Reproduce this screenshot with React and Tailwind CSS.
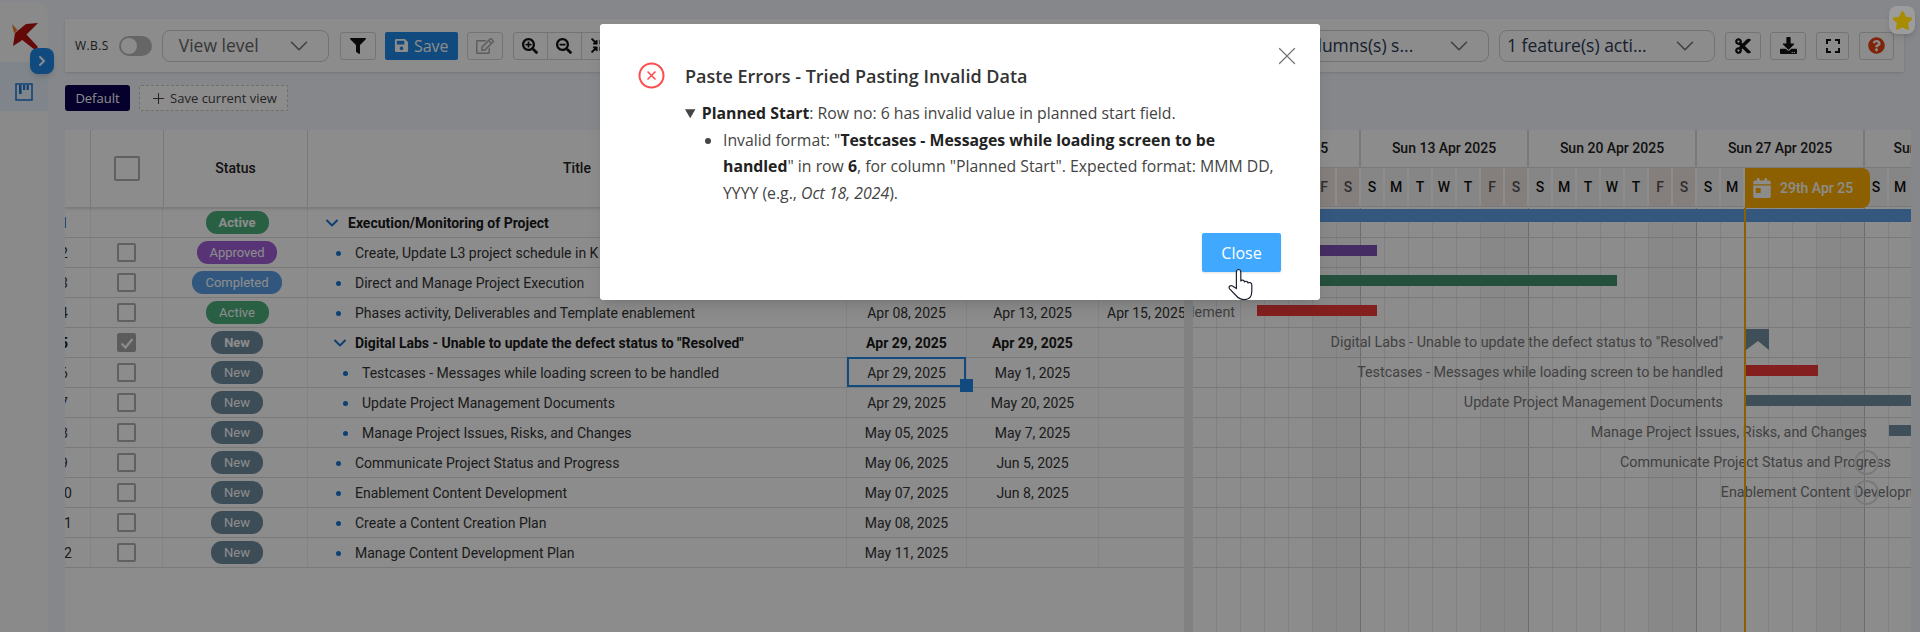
import { ChevronDown, ChevronRight, Plus, X } from 'lucide-react';
import {
  FaCalendarDay,
  FaCompressArrowsAlt,
  FaCut,
  FaDownload,
  FaFilter,
  FaQuestionCircle,
  FaRegEdit,
  FaSave,
  FaSearchMinus,
  FaSearchPlus,
  FaStar,
} from 'react-icons/fa';
import { MdFullscreen } from 'react-icons/md';

const PILLS = {
  Active: 'bg-[#4caf7d] w-[63px]',
  Approved: 'bg-[#a05fd8] w-[80px]',
  Completed: 'bg-[#5a9fe8] w-[90px]',
  New: 'bg-[#6f8d9e] w-[52px]',
};

const ROWS = [
  { id: 1, status: 'Active', title: 'Execution/Monitoring of Project', group: true, noCheck: true, indent: 0 },
  { id: 2, status: 'Approved', title: 'Create, Update L3 project schedule in K', indent: 1 },
  { id: 3, status: 'Completed', title: 'Direct and Manage Project Execution', indent: 1 },
  { id: 4, status: 'Active', title: 'Phases activity, Deliverables and Template enablement', indent: 1, start: 'Apr 08, 2025', end: 'Apr 13, 2025', extra: 'Apr 15, 2025' },
  { id: 5, status: 'New', title: 'Digital Labs - Unable to update the defect status to "Resolved"', group: true, checked: true, indent: 1, start: 'Apr 29, 2025', end: 'Apr 29, 2025' },
  { id: 6, status: 'New', title: 'Testcases - Messages while loading screen to be handled', indent: 2, start: 'Apr 29, 2025', end: 'May 1, 2025', selected: true },
  { id: 7, status: 'New', title: 'Update Project Management Documents', indent: 2, start: 'Apr 29, 2025', end: 'May 20, 2025' },
  { id: 8, status: 'New', title: 'Manage Project Issues, Risks, and Changes', indent: 2, start: 'May 05, 2025', end: 'May 7, 2025' },
  { id: 9, status: 'New', title: 'Communicate Project Status and Progress', indent: 1, start: 'May 06, 2025', end: 'Jun 5, 2025' },
  { id: 10, status: 'New', title: 'Enablement Content Development', indent: 1, start: 'May 07, 2025', end: 'Jun 8, 2025' },
  { id: 11, status: 'New', title: 'Create a Content Creation Plan', indent: 1, start: 'May 08, 2025' },
  { id: 12, status: 'New', title: 'Manage Content Development Plan', indent: 1, start: 'May 11, 2025' },
];

const INDENTS = ['pl-[16px]', 'pl-[24px]', 'pl-[31px]'];

const WEEKS = ['Sun 06 Apr 2025', 'Sun 13 Apr 2025', 'Sun 20 Apr 2025', 'Sun 27 Apr 2025', 'Sun 04 May 2025'];
const DAYS = ['S', 'M', 'T', 'W', 'T', 'F', 'S'];

// one entry per gantt row, x values measured from the left edge of the chart
const GANTT = [
  { bar: [-200, 920], color: 'bg-[#5f9fe6]', tall: true },
  { bar: [-60, 244], color: 'bg-[#7f50b5]' },
  { bar: [-60, 484], color: 'bg-[#449070]' },
  { bar: [64, 120], color: 'bg-[#f03a3a]', label: 'Phases activity, Deliverables and Template enablement', labelEnd: 42 },
  { milestone: true, label: 'Digital Labs - Unable to update the defect status to "Resolved"', labelEnd: 530 },
  { bar: [552.5, 72], color: 'bg-[#f03a3a]', label: 'Testcases - Messages while loading screen to be handled', labelEnd: 530 },
  { bar: [552.5, 170], color: 'bg-[#7291a4]', label: 'Update Project Management Documents', labelEnd: 530 },
  { bar: [696, 30], color: 'bg-[#7291a4]', label: 'Manage Project Issues, Risks, and Changes', labelEnd: 674 },
  { ring: true, label: 'Communicate Project Status and Progress', labelEnd: 698 },
  { ring: true, label: 'Enablement Content Development', labelEnd: 745 },
  {},
  {},
];

function ToolButton({ className = '', children }) {
  return (
    <div className={`h-[28px] flex items-center justify-center border border-[#d4d4d4] rounded-[3px] shrink-0 ${className}`}>
      {children}
    </div>
  );
}

function Select({ className = '', label }) {
  return (
    <div className={`h-[32px] flex items-center justify-between border border-[#d0d0d0] rounded-[8px] pr-[14px] shrink-0 text-[17.5px] font-['Open_Sans',sans-serif] overflow-hidden ${className}`}>
      <span className="whitespace-nowrap">{label}</span>
      <ChevronDown className="w-[30px] h-[30px] text-[#777] shrink-0" strokeWidth={1.3} />
    </div>
  );
}

function Logo() {
  return (
    <svg viewBox="0 0 26 27" className="w-[26px] h-[27px]">
      <polygon points="0,1 5.5,7 2,10" fill="#f07a28" />
      <polygon points="26,0 14,1 3,10 1,23 9,18 15,11" fill="#b5120e" />
      <polygon points="9,16 14,11 26,24 23,27" fill="#b5120e" />
    </svg>
  );
}

function Sidebar() {
  return (
    <div className="w-[48px] shrink-0 mt-[2px] bg-[#fbfcfe] rounded-tr-[14px] flex flex-col relative">
      <div className="h-[60px] pt-[21px] pl-[12px]">
        <Logo />
      </div>
      <div className="h-[49px] bg-[#e8f2fb] flex items-center justify-center pt-[10px]">
        <svg viewBox="0 0 18 18" className="w-[18px] h-[18px] text-[#1976d2]" fill="none" stroke="currentColor">
          <rect x="1" y="1" width="16" height="16" strokeWidth="1.5" />
          <rect x="4" y="2" width="2.6" height="9" fill="currentColor" stroke="none" />
          <rect x="8" y="2" width="2.2" height="5" fill="currentColor" stroke="none" />
          <rect x="11.6" y="2" width="2.2" height="5" fill="currentColor" stroke="none" />
        </svg>
      </div>
      <div className="absolute left-[30px] top-[46px] w-[24px] h-[26px] rounded-[8px] bg-[#1e88e5] flex items-center justify-center shadow-md">
        <ChevronRight className="w-[16px] h-[16px] text-white" strokeWidth={3} />
      </div>
    </div>
  );
}

function Toolbar() {
  return (
    <div className="h-[53px] w-[1839px] mt-[19px] bg-white shadow-sm flex items-center pl-[10px] shrink-0">
      <span className="text-[12px] tracking-[0.4px] text-[#333] font-['Open_Sans',sans-serif]">W.B.S</span>
      <div className="ml-[10px] w-[33px] h-[20px] rounded-full bg-[#bbb] flex items-center pl-[2px]">
        <div className="w-[16px] h-[16px] rounded-full bg-white" />
      </div>
      <Select className="ml-[10px] w-[167px] pl-[16px] text-[#666]" label="View level" />
      <ToolButton className="ml-[11px] w-[36px]">
        <FaFilter className="w-[16px] h-[16px] text-[#111]" />
      </ToolButton>
      <div className="ml-[9px] w-[73px] h-[28px] rounded-[2px] bg-[#1e88e5] flex items-center justify-center gap-[5px] text-white text-[16px] font-['Open_Sans',sans-serif]">
        <FaSave className="w-[15px] h-[15px]" />
        Save
      </div>
      <ToolButton className="ml-[9px] w-[36px]">
        <FaRegEdit className="w-[18px] h-[18px] text-[#aaa]" />
      </ToolButton>
      <div className="ml-[10px] h-[28px] flex border border-[#d4d4d4] rounded-[3px]">
        <div className="w-[34px] flex items-center justify-center border-r border-[#d4d4d4]">
          <FaSearchPlus className="w-[16px] h-[16px] text-[#111]" />
        </div>
        <div className="w-[34px] flex items-center justify-center border-r border-[#d4d4d4]">
          <FaSearchMinus className="w-[16px] h-[16px] text-[#111]" />
        </div>
        <div className="w-[34px] flex items-center justify-center">
          <FaCompressArrowsAlt className="w-[15px] h-[15px] text-[#111]" />
        </div>
      </div>
      <Select className="ml-auto w-[213px] pl-[7px] text-[#2b3a55]" label="5 columns(s) s..." />
      <Select className="ml-[10px] w-[216px] pl-[7px] text-[#2b3a55]" label="1 feature(s) acti..." />
      <ToolButton className="ml-[10px] w-[36px]">
        <FaCut className="w-[18px] h-[18px] text-[#111]" />
      </ToolButton>
      <ToolButton className="ml-[9px] w-[36px]">
        <FaDownload className="w-[17px] h-[17px] text-[#111]" />
      </ToolButton>
      <ToolButton className="ml-[10px] w-[33px]">
        <MdFullscreen className="w-[24px] h-[24px] text-[#111]" />
      </ToolButton>
      <ToolButton className="ml-[10px] w-[35px] mr-[10px]">
        <FaQuestionCircle className="w-[17px] h-[17px] text-[#e8420f]" />
      </ToolButton>
    </div>
  );
}

function Tabs() {
  return (
    <div className="h-[26px] mt-[13px] flex items-stretch gap-[9px] text-[13px] font-['Open_Sans',sans-serif] shrink-0">
      <div className="w-[65px] bg-[#0a0050] text-white rounded-[3px] flex items-center justify-center pt-px">Default</div>
      <div className="w-[149px] border border-dashed border-[#c8c8c8] bg-white rounded-[2px] flex items-center justify-center gap-[3px] text-[#444] pt-px">
        <Plus className="w-[17px] h-[17px]" strokeWidth={1.5} />
        Save current view
      </div>
    </div>
  );
}

function Checkbox({ big, checked }) {
  if (checked) {
    return (
      <div className="w-[19px] h-[19px] rounded-[2px] bg-[#a8a8a8] flex items-center justify-center">
        <svg viewBox="0 0 16 16" className="w-[16px] h-[16px]" fill="none" stroke="#fff" strokeWidth="2.2">
          <path d="M2.5 8.5 L6.5 12.5 L13.5 4" />
        </svg>
      </div>
    );
  }
  return (
    <div className={`${big ? 'w-[26px] h-[25px]' : 'w-[19px] h-[19px]'} rounded-[2px] border-2 border-[#b0b0b0] bg-white`} />
  );
}

function TableHeader() {
  return (
    <div className="h-[78px] flex bg-white border-b border-[#e2e2e2] shadow-sm text-[14px] font-medium text-[#222] relative">
      <div className="w-[26px] border-r border-[#dcdcdc]" />
      <div className="w-[73px] border-r border-[#dcdcdc] flex items-center justify-center">
        <Checkbox big />
      </div>
      <div className="w-[144px] border-r border-[#dcdcdc] flex items-center justify-center">Status</div>
      <div className="w-[539px] flex items-center justify-center border-r border-[#dcdcdc]">Title</div>
      <div className="w-[120px] border-r border-[#dcdcdc]" />
      <div className="w-[132px] border-r border-[#dcdcdc]" />
      <div className="flex-1" />
    </div>
  );
}

function TableRow({ row }) {
  return (
    <div className={`h-[30px] flex items-stretch border-b border-[#dcdcdc] ${row.group ? 'font-bold text-[#1a1a1a]' : 'text-[#333]'}`}>
      <div className="w-[26px] border-r border-[#eeeeee] overflow-hidden flex items-center pt-px">
        <div className="w-[54px] -ml-[28px] text-center shrink-0">{row.id}</div>
      </div>
      <div className="w-[72px] border-r border-[#eeeeee] flex items-center justify-center">
        {!row.noCheck && <Checkbox checked={row.checked} />}
      </div>
      <div className="w-[145px] border-r border-[#eeeeee] flex items-center justify-center pl-[4px]">
        <div className={`h-[23px] rounded-[11px] flex items-center justify-center text-white text-[13px] ${PILLS[row.status]}`}>
          {row.status}
        </div>
      </div>
      <div className={`w-[539px] border-r border-[#eeeeee] flex items-center whitespace-nowrap overflow-hidden pt-px ${INDENTS[row.indent]}`}>
        {row.group ? (
          <ChevronDown className={`w-[20px] h-[20px] text-[#1976d2] shrink-0 -ml-[2px] ${row.indent ? 'mr-[5px]' : 'mr-[6px]'}`} strokeWidth={2.4} />
        ) : (
          <span className="w-[5px] h-[5px] rounded-full bg-[#1976d2] mr-[14px] ml-[4px] shrink-0" />
        )}
        {row.title}
      </div>
      <div className="w-[120px] border-r border-[#eeeeee] flex items-center justify-center relative pt-px">
        {row.start}
        {row.selected && (
          <>
            <div className="absolute inset-0 -top-px border-2 border-[#1e88e5]" />
            <div className="absolute -right-[7px] -bottom-[5px] w-[13px] h-[13px] bg-[#1e88e5] z-10" />
          </>
        )}
      </div>
      <div className="w-[132px] border-r border-[#eeeeee] flex items-center justify-center pt-px">{row.end}</div>
      <div className="flex-1 flex items-center pl-[8px] whitespace-nowrap overflow-hidden pt-px">{row.extra}</div>
    </div>
  );
}

function GanttHeader() {
  return (
    <div className="shrink-0 bg-white relative h-[78px] text-[14px] font-medium text-[#222] overflow-hidden">
      <div className="flex h-[38px] border-b border-[#dcdcdc]">
        {WEEKS.map((week) => (
          <div key={week} className="w-[168px] shrink-0 border-r-2 border-[#dcdcdc] flex items-center justify-center whitespace-nowrap">
            {week}
          </div>
        ))}
      </div>
      <div className="flex h-[39px] border-b border-[#dcdcdc]">
        {WEEKS.map((week) =>
          DAYS.map((day, i) => (
            <div
              key={week + i}
              className={`w-[24px] shrink-0 border-r-2 border-white flex items-center justify-center ${i > 4 ? 'bg-[#f1e6e2] text-[#555]' : 'bg-[#f5f5f5] text-[#111]'}`}
            >
              {day}
            </div>
          ))
        )}
      </div>
      <div className="absolute left-[552px] top-[38px] w-[125px] h-[40px] bg-[#ffb000] rounded-r-[8px] flex items-center pl-[8px] gap-[9px] text-white">
        <FaCalendarDay className="w-[18px] h-[20px]" />
        29th Apr 25
      </div>
    </div>
  );
}

function GanttRow({ item }) {
  return (
    <div className="h-[30px] border-b border-[#dcdcdc] relative">
      {item.label && (
        <div
          className="absolute top-0 h-[30px] flex items-center justify-end whitespace-nowrap text-[14.35px] text-[#777]"
          style={{ right: 718 - item.labelEnd }}
        >
          {item.label}
        </div>
      )}
      {item.bar && (
        <div
          className={`absolute ${item.tall ? 'top-[1px] h-[13px]' : 'top-[7px] h-[11px]'} ${item.color}`}
          style={{ left: item.bar[0], width: item.bar[1] }}
        />
      )}
      {item.milestone && (
        <svg viewBox="0 0 23 21" className="absolute left-[553px] top-[1px] w-[23px] h-[21px]">
          <polygon points="0,0 23,0 23,21 12,12 0,21" fill="#7291a4" />
        </svg>
      )}
      {item.ring && (
        <div className="absolute left-[661px] top-[2px] w-[25px] h-[25px] rounded-full border-2 border-[#ddd]" />
      )}
    </div>
  );
}

function Gantt() {
  return (
    <div className="flex-1 min-w-0 flex flex-col overflow-hidden relative">
      <GanttHeader />
      <div className="flex-1 relative">
        {/* day columns sit under the rows */}
        <div className="absolute inset-0 flex">
          {WEEKS.map((week) =>
            DAYS.map((day, i) => (
              <div
                key={week + i}
                className={`w-[24px] shrink-0 border-r ${i === 6 ? 'border-[#c6c6c6]' : 'border-[#ececec]'} ${i > 4 ? 'bg-[#f8f8f8]' : ''}`}
              />
            ))
          )}
        </div>
        <div className="relative">
          {GANTT.map((item, i) => (
            <GanttRow key={i} item={item} />
          ))}
        </div>
        <div className="absolute left-[551px] top-0 bottom-0 w-[2px] bg-[#ffb000]" />
      </div>
    </div>
  );
}

function HandCursor() {
  return (
    <svg viewBox="0 0 26 33" className="absolute left-[628px] top-[244px] w-[26px] h-[33px]" fill="#fff" stroke="#1c2230" strokeWidth="1.2" strokeLinejoin="round">
      <path d="M10.5 1.5 C12.3 1.5 12.8 2.8 12.8 4.5 V13 C13.5 11.6 16.2 11.8 16.5 14 C17.3 12.8 19.8 13 20 15 C21 14.1 23.6 14.4 23.8 16.8 V23 C23.8 28 21.5 31.6 16.5 31.6 C12.5 31.6 10.6 30.5 8.5 28 L1.6 20.8 C0.2 19 2.2 16.6 4.5 18 L8.4 20.6 V4.5 C8.4 2.8 8.9 1.5 10.5 1.5 Z" />
    </svg>
  );
}

function PasteErrorModal() {
  return (
    <div className="absolute inset-0 bg-black/45 z-20">
      <div className="relative w-[720px] h-[276px] mx-auto mt-[24px] bg-white rounded-[3px] shadow-lg pt-[38px] pl-[38px] pr-[38px] font-['Open_Sans',sans-serif] text-[15.8px] text-[#444]">
        <X className="absolute right-[18px] top-[17px] w-[30px] h-[30px] text-[#777]" strokeWidth={1} />
        <div className="flex items-center gap-[20px] h-[27px]">
          <svg viewBox="0 0 27 27" className="w-[27px] h-[27px]" fill="none" stroke="#ff4d4f" strokeWidth="2">
            <circle cx="13.5" cy="13.5" r="12" />
            <path d="M9.5 9.5 L17.5 17.5 M17.5 9.5 L9.5 17.5" strokeWidth="1.6" />
          </svg>
          <div className="text-[18px] font-semibold text-[#333] leading-[24px]">Paste Errors - Tried Pasting Invalid Data</div>
        </div>
        <details open className="ml-[47px] mt-[11px] leading-[26.5px] w-[597px]">
          <summary>
            <b className="text-[#222]">Planned Start</b>: Row no: 6 has invalid value in planned start field.
          </summary>
          <ul className="list-disc pl-[38px]">
            <li>
              Invalid format: "<b className="text-[#222]">Testcases - Messages while loading screen to be handled</b>" in row <b className="text-[#222]">6</b>, for column "Planned Start". Expected format: MMM DD, YYYY (e.g., <i>Oct 18, 2024</i>).
            </li>
          </ul>
        </details>
        <div className="absolute right-[39px] bottom-[28px] w-[79px] h-[39px] rounded-[2px] bg-[#40a9ff] text-white text-[16px] flex items-center justify-center shadow-sm">
          Close
        </div>
        <HandCursor />
      </div>
    </div>
  );
}

export default function App() {
  return (
    <div className="relative w-[1920px] h-[632px] overflow-hidden flex bg-[#f2f6fb] font-['Roboto',sans-serif] text-[14px]">
      <Sidebar />
      <div className="flex-1 min-w-0 flex flex-col pl-[17px]">
        <Toolbar />
        <Tabs />
        <div className="mt-[19px] flex-1 min-h-0 w-[1846px] flex bg-white">
          <div className="w-[1119px] shrink-0 flex flex-col overflow-hidden">
            <TableHeader />
            {ROWS.map((row) => (
              <TableRow key={row.id} row={row} />
            ))}
          </div>
          <div className="w-[9px] shrink-0 bg-[#ebebeb]" />
          <Gantt />
        </div>
      </div>
      <PasteErrorModal />
      {/* the help widget floats above the modal mask */}
      <div className="absolute right-[5px] top-[6px] w-[26px] h-[28px] rounded-[8px] bg-[#9c9c9c] flex items-center justify-center shadow-md z-30">
        <FaStar className="w-[21px] h-[21px] text-[#a88c00]" />
      </div>
    </div>
  );
}
